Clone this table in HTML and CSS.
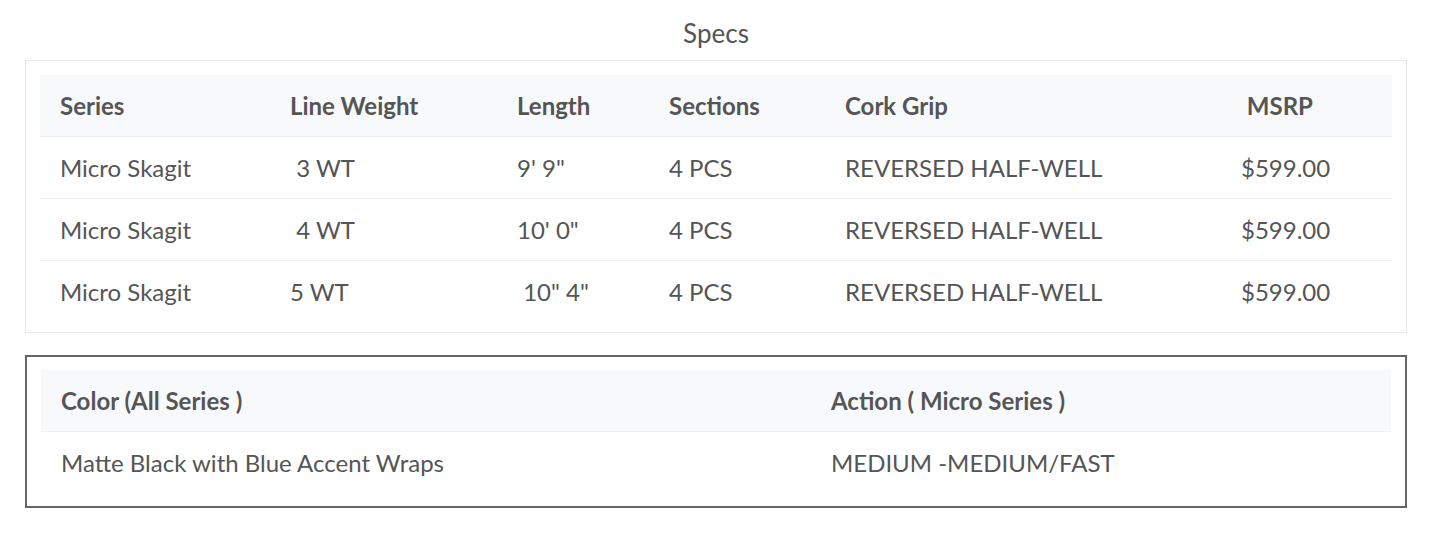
FILE: index.html
```html
<!DOCTYPE html>
<html>
<head>
<meta charset="utf-8">
<link rel="stylesheet" href="styles.css">
</head>
<body>
<div class="page">
  <h2 class="title">Specs</h2>
  <div class="box box-light">
    <table class="spec spec-main">
      <colgroup>
        <col class="c1"><col class="c2"><col class="c3"><col class="c4"><col class="c5"><col class="c6">
      </colgroup>
      <thead>
        <tr><th>Series</th><th>Line Weight</th><th>Length</th><th>Sections</th><th>Cork Grip</th><th>&nbsp;MSRP</th></tr>
      </thead>
      <tbody>
        <tr><td>Micro Skagit</td><td>&nbsp;3 WT</td><td>9' 9"</td><td>4 PCS</td><td>REVERSED HALF-WELL</td><td>$599.00</td></tr>
        <tr><td>Micro Skagit</td><td>&nbsp;4 WT</td><td>10' 0"</td><td>4 PCS</td><td>REVERSED HALF-WELL</td><td>$599.00</td></tr>
        <tr><td>Micro Skagit</td><td>5 WT</td><td>&nbsp;10" 4"</td><td>4 PCS</td><td>REVERSED HALF-WELL</td><td>$599.00</td></tr>
      </tbody>
    </table>
  </div>
  <div class="box box-dark">
    <table class="spec spec-extra">
      <colgroup>
        <col class="d1"><col class="d2">
      </colgroup>
      <thead>
        <tr><th>Color (All Series )</th><th>Action ( Micro Series )</th></tr>
      </thead>
      <tbody>
        <tr><td>Matte Black with Blue Accent Wraps</td><td>MEDIUM -MEDIUM/FAST</td></tr>
      </tbody>
    </table>
  </div>
</div>
</body>
</html>
```

FILE: styles.css
```css
html, body {
  margin: 0;
  padding: 0;
  background: #ffffff;
}
body {
  font-family: Lato, "Liberation Sans", sans-serif;
  color: #555555;
}
.page {
  width: 1382px;
  margin-left: 25px;
  padding-top: 18px;
}
.title {
  margin: 0 0 12px 0;
  text-align: center;
  font-size: 26px;
  font-weight: 400;
  line-height: 30px;
  color: #555555;
}
.box {
  background: #fff;
}
.box-light {
  border: 1px solid #e8e8e8;
  padding: 14px 14px 10px 14px;
}
.box-dark {
  margin-top: 22px;
  border: 2px solid #666666;
  padding: 13px 14px 13px 14px;
}
.spec {
  width: 100%;
  border-collapse: collapse;
  table-layout: fixed;
  font-size: 24px;
}
.spec th,
.spec td {
  text-align: left;
  vertical-align: middle;
  padding: 0 20px;
  white-space: nowrap;
  color: #555555;
}
.spec thead th {
  height: 61px;
  background: #f7f9fa;
  font-weight: 700;
  border-bottom: 1px solid #eceeef;
}
.spec tbody td {
  height: 61px;
  font-weight: 400;
  border-top: 1px solid #eceeef;
}
.spec thead + tbody tr:first-child td {
  border-top: none;
}
.c1 { width: 230px; }
.c2 { width: 227px; }
.c3 { width: 152px; }
.c4 { width: 176px; }
.c5 { width: 396px; }
.c6 { width: 171px; }
.d1 { width: 770px; }
.d2 { width: 580px; }
```
